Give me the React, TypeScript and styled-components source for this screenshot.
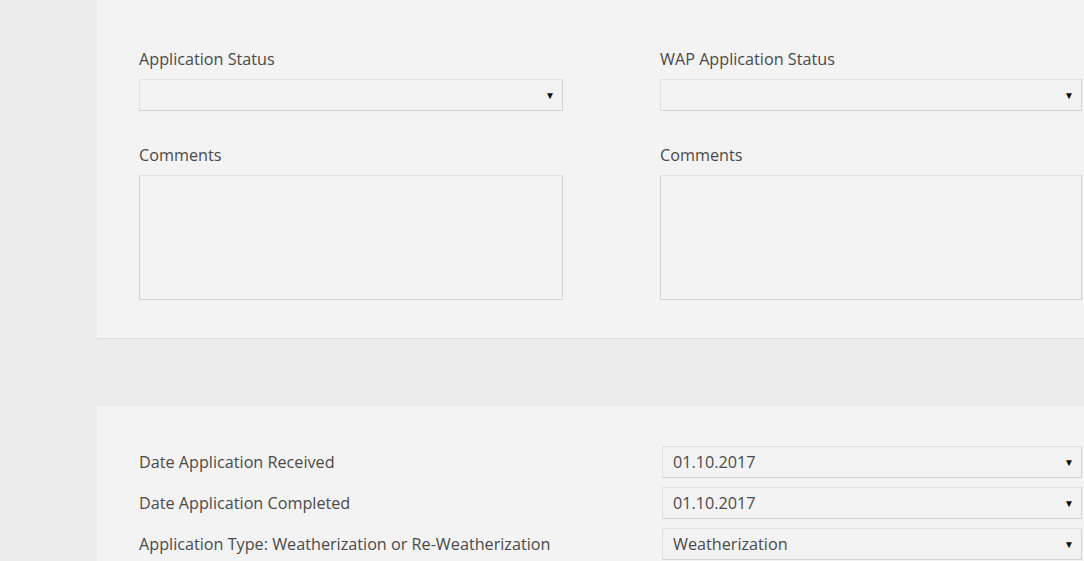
import React from 'react';
import styled, { createGlobalStyle } from 'styled-components';

const GlobalStyle = createGlobalStyle`
  html, body {
    margin: 0;
    padding: 0;
    background: #ebebeb;
    overflow: hidden;
  }
  body {
    font-family: "Open Sans", "Noto Sans", sans-serif;
    color: #4a4a4a;
  }
`;

const Page = styled.div`
  display: flex;
  width: 1084px;
  height: 561px;
  overflow: hidden;
`;

const Sidebar = styled.div`
  width: 97px;
  flex-shrink: 0;
  background: #ebebeb;
`;

const Main = styled.div`
  flex: 1;
  display: flex;
  flex-direction: column;
  background: #ebebeb;
`;

const TopPanel = styled.section`
  height: 339px;
  box-sizing: border-box;
  padding: 48px 0 0 42px;
  background: #f3f3f3;
  border-bottom: 1px solid #dedede;
  display: grid;
  grid-template-columns: 424px 422px;
  column-gap: 97px;
  align-content: start;
`;

const Column = styled.div`
  display: flex;
  flex-direction: column;
`;

const Label = styled.label<{ $mt?: number }>`
  display: block;
  font-size: 16.2px;
  line-height: 22px;
  color: #4a4a4a;
  margin-top: ${({ $mt }) => $mt ?? 0}px;
  margin-bottom: 9px;
`;

const SelectBox = styled.div`
  height: 32px;
  box-sizing: border-box;
  border: 1px solid #d4d4d4;
  border-top-color: #e2e2e2;
  border-left-color: #e2e2e2;
  background: #f3f3f3;
  display: flex;
  align-items: center;
  justify-content: space-between;
  padding: 0 7px 0 10px;
  font-size: 16.2px;
  color: #4a4a4a;
`;

const Arrow = styled.span`
  font-size: 10px;
  color: #111;
  line-height: 1;
`;

const TextArea = styled.div`
  height: 125px;
  box-sizing: border-box;
  border: 1px solid #d4d4d4;
  border-top-color: #e2e2e2;
  background: #f3f3f3;
`;

const Band = styled.div`
  height: 67px;
  background: #ebebeb;
`;

const BottomPanel = styled.section`
  flex: 1;
  background: #f3f3f3;
  padding: 40px 0 0 42px;
  display: grid;
  grid-template-columns: 523px 420px;
  row-gap: 9px;
  align-content: start;
`;

const RowLabel = styled.div`
  font-size: 16.2px;
  color: #4a4a4a;
  display: flex;
  align-items: center;
`;

const Select: React.FC<{ value?: string }> = ({ value }) => (
  <SelectBox>
    <span>{value ?? ''}</span>
    <Arrow>▼</Arrow>
  </SelectBox>
);

const StatusColumn: React.FC<{ title: string }> = ({ title }) => (
  <Column>
    <Label>{title}</Label>
    <Select />
    <Label $mt={33}>Comments</Label>
    <TextArea />
  </Column>
);

const rows = [
  { label: 'Date Application Received', value: '01.10.2017' },
  { label: 'Date Application Completed', value: '01.10.2017' },
  { label: 'Application Type: Weatherization or Re-Weatherization', value: 'Weatherization' },
];

export default function App() {
  return (
    <>
      <GlobalStyle />
      <Page>
        <Sidebar />
        <Main>
          <TopPanel>
            <StatusColumn title="Application Status" />
            <StatusColumn title="WAP Application Status" />
          </TopPanel>
          <Band />
          <BottomPanel>
            {rows.map((r) => (
              <React.Fragment key={r.label}>
                <RowLabel>{r.label}</RowLabel>
                <Select value={r.value} />
              </React.Fragment>
            ))}
          </BottomPanel>
        </Main>
      </Page>
    </>
  );
}
